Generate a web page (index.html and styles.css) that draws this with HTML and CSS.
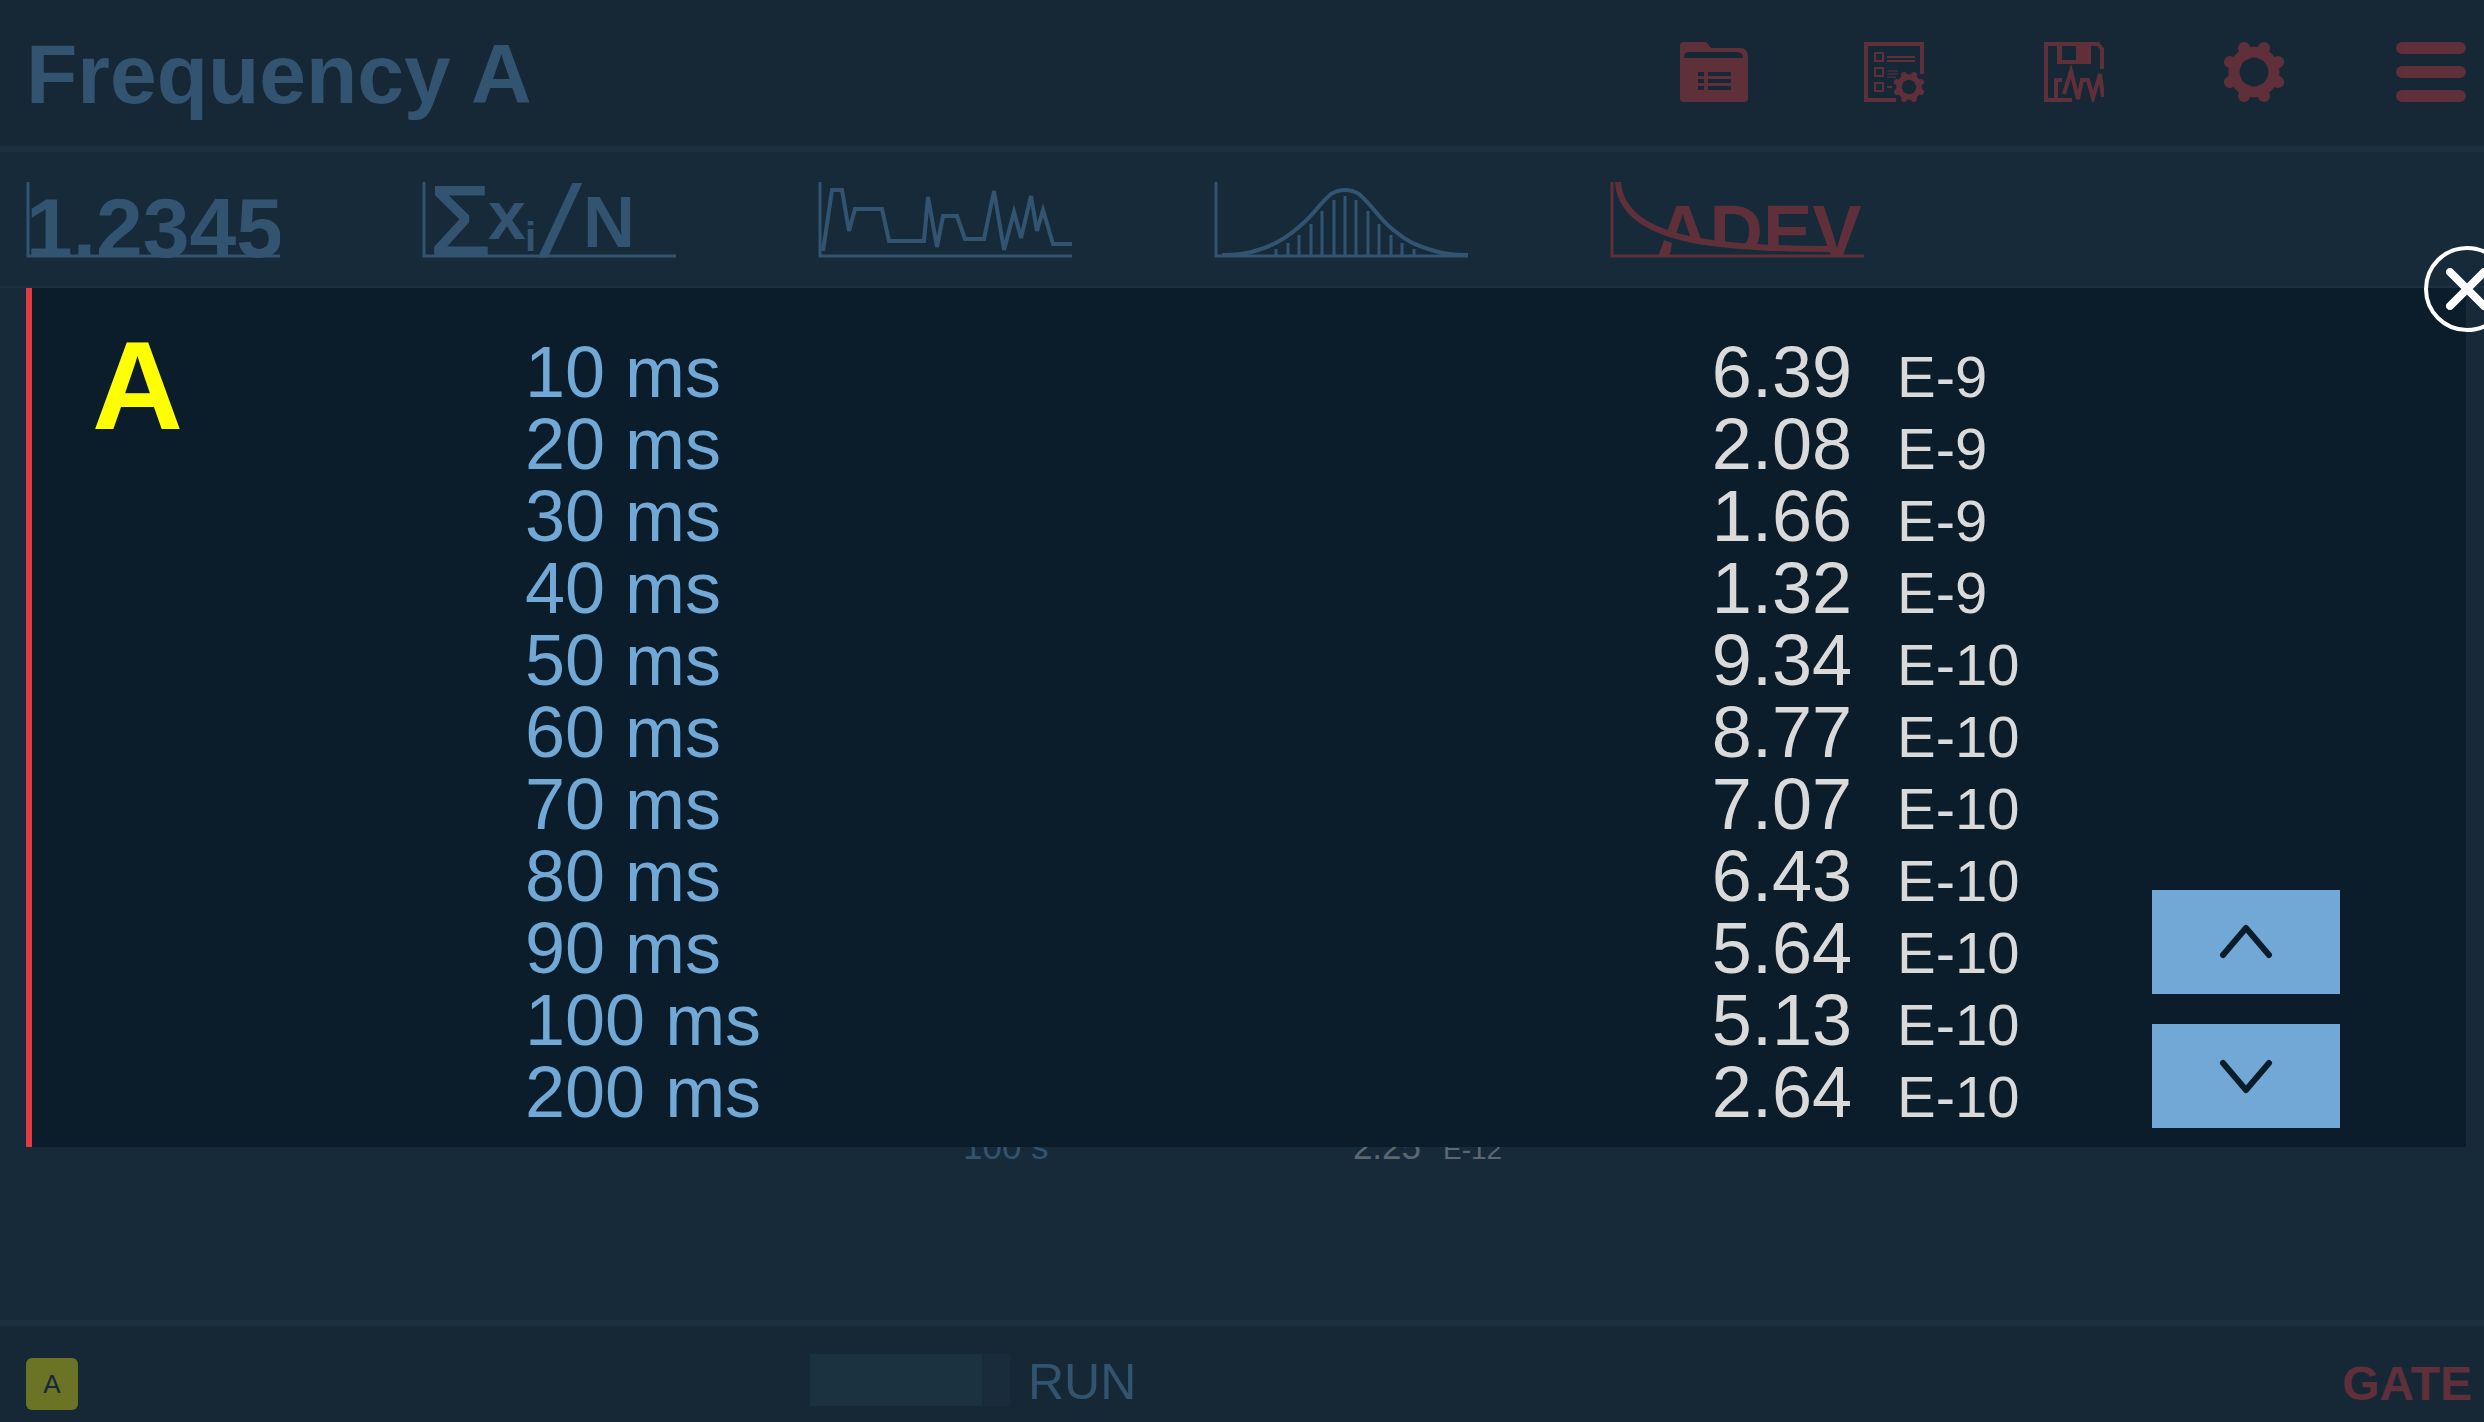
FILE: index.html
```html
<!DOCTYPE html>
<html lang="en">
<head>
  <meta charset="UTF-8" />
  <meta name="viewport" content="width=device-width, initial-scale=1.0"/>
  <title>Frequency A</title>
  <link rel="stylesheet" href="styles.css">
</head>
<body>
  <header class="topbar">
    <h1>Frequency A</h1>
    <div class="tools">
      <button aria-label="Files">
        <svg width="68" height="60" viewBox="0 0 68 60">
          <path fill="currentColor" fill-rule="evenodd" d="M4 0H25Q27 0 28 2L31 6H60Q68 6 68 15V56Q68 60 64 60H4Q0 60 0 56V4Q0 0 4 0ZM8 10Q4 10 4 16H63Q63 10 57 10Z"/>
          <path class="cut" d="M18 32H24M28 32H51M18 39H24M28 39H51M18 46H24M28 46H51"/>
        </svg>
      </button>
      <button aria-label="Measurement setup">
        <svg width="60" height="60" viewBox="0 0 60 60">
          <path class="line" d="M58 32V2H2V58H32"/>
          <path class="line thin" d="M11 11H19V19H11ZM11 26H19V34H11ZM11 41H19V49H11ZM23 15H51M23 19H51M23 45H28"/>
          <path class="line faint" d="M23 29H34M23 32H34M23 35H32"/>
          <g transform="translate(30 30) scale(.5)">
            <circle class="line ring" cx="30" cy="30" r="20"/>
            <path class="line teeth" d="M37.6 11.5L40 6M48.5 22.4L54 20M48.5 37.6L54 40M37.6 48.5L40 54M22.4 48.5L20 54M11.5 37.6L6 40M11.5 22.4L6 20M22.4 11.5L20 6"/>
          </g>
        </svg>
      </button>
      <button aria-label="Save data">
        <svg width="60" height="60" viewBox="0 0 60 60">
          <path class="line" d="M28 58H2V2H54L58 7V27"/>
          <path fill="currentColor" fill-rule="evenodd" d="M13 2H47V22H13ZM18 4V18H32V4Z"/>
          <path class="line" d="M12 58V38H18"/>
          <path class="line" d="M20 52L27 29L34 57L38 38H44L49 56L56 32L59 55"/>
        </svg>
      </button>
      <button aria-label="Settings">
        <svg width="60" height="60" viewBox="0 0 60 60">
          <circle class="line ring" cx="30" cy="30" r="20"/>
          <path class="line teeth" d="M37.6 11.5L40 6M48.5 22.4L54 20M48.5 37.6L54 40M37.6 48.5L40 54M22.4 48.5L20 54M11.5 37.6L6 40M11.5 22.4L6 20M22.4 11.5L20 6"/>
        </svg>
      </button>
      <button class="menu" aria-label="Menu">
        <svg width="70" height="60" viewBox="0 0 70 60">
          <path class="line bars" d="M6 6H64M6 30H64M6 54H64"/>
        </svg>
      </button>
    </div>
  </header>

  <nav class="tabs">
    <button aria-label="Numeric">
      <svg width="254" height="76" viewBox="0 0 254 76">
        <path class="line axis" d="M2 0V74H254"/>
        <text x="0" y="75" class="t84">1.2345</text>
      </svg>
    </button>
    <button aria-label="Statistics">
      <svg width="254" height="76" viewBox="0 0 254 76">
        <path class="line axis" d="M2 0V74H254"/>
        <text x="8" y="73" class="t98 sum">Σ</text>
        <text x="66" y="57" class="t68">x</text>
        <text x="103" y="69" class="t40">i</text>
        <text x="123" y="73" class="t98 slash">/</text>
        <text x="161" y="65" class="t72">N</text>
      </svg>
    </button>
    <button aria-label="Trend">
      <svg width="254" height="76" viewBox="0 0 254 76">
        <path class="line axis" d="M2 0V74H254"/>
        <path class="line" d="M5 69L14 8H24L31 49L37 27H64L71 59H106L110 15L119 65L125 34H139L147 57H166L176 9L186 68L196 30L203 56L213 14L219 49L225 28L235 62H254"/>
      </svg>
    </button>
    <button aria-label="Histogram">
      <svg width="254" height="76" viewBox="0 0 254 76">
        <path class="line axis" d="M2 0V74H254"/>
        <path class="line" d="M8 73C24 73 32 72 41 69C52 66 60 62 67 58C74 54 79 50 85 45C91 40 96 35 101 29C106 23 111 17 117 12C122 9 126 8 131 8C136 8 140 9 145 12C151 17 156 23 161 29C166 35 171 41 177 46C183 51 188 55 195 59C202 63 210 66 221 69C230 72 240 73 254 73"/>
        <path class="line axis" d="M62 67V74M74 61V74M85 53V74M97 42V74M108 29V74M120 18V74M131 14V74M142 18V74M154 29V74M165 42V74M177 53V74M188 61V74M200 67V74"/>
      </svg>
    </button>
    <button class="active" aria-label="Allan deviation">
      <svg width="254" height="76" viewBox="0 0 254 76">
        <text x="46" y="75" class="t74">ADEV</text>
        <path class="shade" d="M44 48C90 62 130 66 220 66V76H60L62 61L44 54Z"/>
        <path class="line axis" d="M2 0V74H254"/>
        <path class="line curve" d="M8 0C12 60 110 67 220 67"/>
      </svg>
    </button>
  </nav>

  <main>
    <table class="summary">
      <tr>
        <td>100 s</td>
        <td class="value">2.25</td>
        <td class="exp">E-12</td>
      </tr>
    </table>

    <section class="popup" role="dialog" aria-label="Allan deviation values">
      <h2>A</h2>
      <table class="values">
        <tr><td>10 ms</td><td class="value">6.39</td><td class="exp">E-9</td></tr>
        <tr><td>20 ms</td><td class="value">2.08</td><td class="exp">E-9</td></tr>
        <tr><td>30 ms</td><td class="value">1.66</td><td class="exp">E-9</td></tr>
        <tr><td>40 ms</td><td class="value">1.32</td><td class="exp">E-9</td></tr>
        <tr><td>50 ms</td><td class="value">9.34</td><td class="exp">E-10</td></tr>
        <tr><td>60 ms</td><td class="value">8.77</td><td class="exp">E-10</td></tr>
        <tr><td>70 ms</td><td class="value">7.07</td><td class="exp">E-10</td></tr>
        <tr><td>80 ms</td><td class="value">6.43</td><td class="exp">E-10</td></tr>
        <tr><td>90 ms</td><td class="value">5.64</td><td class="exp">E-10</td></tr>
        <tr><td>100 ms</td><td class="value">5.13</td><td class="exp">E-10</td></tr>
        <tr><td>200 ms</td><td class="value">2.64</td><td class="exp">E-10</td></tr>
      </table>
      <div class="scroll">
        <button aria-label="Scroll up">
          <svg width="54" height="36" viewBox="0 0 54 36"><path d="M4 31L27 4L50 31"/></svg>
        </button>
        <button aria-label="Scroll down">
          <svg width="54" height="36" viewBox="0 0 54 36"><path d="M4 5L27 32L50 5"/></svg>
        </button>
      </div>
      <button class="close" aria-label="Close">
        <svg width="42" height="42" viewBox="0 0 42 42"><path d="M4 4L38 38M38 4L4 38"/></svg>
      </button>
    </section>
  </main>

  <footer class="status">
    <span class="badge">A</span>
    <div class="run">
      <progress id="run" value="86" max="100"></progress>
      <label for="run">RUN</label>
    </div>
    <span class="gate">GATE</span>
  </footer>
</body>
</html>
```
FILE: styles.css
```css
* {
  box-sizing: border-box;
}
body {
  margin: 0;
  min-height: 100vh;
  display: flex;
  flex-direction: column;
  overflow: hidden;
  background-color: #162a3a;
  color: #335470;
  font-family: "Liberation Sans", Arial, sans-serif;
}
h1, h2 {
  margin: 0;
}
button {
  padding: 0;
  border: none;
  background: none;
  color: inherit;
  cursor: pointer;
}
svg {
  display: block;
}
table {
  border-collapse: collapse;
}
td {
  padding: 0;
  vertical-align: baseline;
}

/* top bar */
.topbar {
  display: flex;
  justify-content: space-between;
  align-items: center;
  height: 152px;
  padding: 0 18px 2px 26px;
  background-color: #162836;
  border-bottom: 6px solid #1b3040;
}
h1 {
  padding-top: 4px;
  font-size: 84px;
  line-height: 96px;
}
.tools {
  display: grid;
  grid-template-columns: repeat(4, 180px) 122px;
  justify-items: center;
  color: #5f303a;
}
.tools .menu {
  justify-self: end;
}

/* icon strokes */
.line {
  fill: none;
  stroke: currentColor;
  stroke-width: 4;
}
.thin {
  stroke-width: 2;
}
.faint {
  stroke-width: 2;
  opacity: 0.5;
}
.ring {
  stroke-width: 11;
}
.teeth {
  stroke-width: 12;
  stroke-linecap: round;
}
.bars {
  stroke-width: 12;
  stroke-linecap: round;
}
.curve {
  stroke-width: 6;
}
.axis {
  stroke-width: 3;
}
.cut {
  fill: none;
  stroke: #162836;
  stroke-width: 4;
}
.shade {
  fill: #162a3a;
}

/* view tabs */
.tabs {
  display: flex;
  align-items: center;
  gap: 142px;
  height: 136px;
  padding: 2px 26px 0;
  border-bottom: 2px solid #1b3040;
}
.tabs text {
  fill: currentColor;
  font-family: "Liberation Sans", Arial, sans-serif;
  font-weight: bold;
}
.tabs .active {
  color: #5f303a;
}
.t40 {
  font-size: 40px;
}
.t68 {
  font-size: 68px;
}
.t72 {
  font-size: 72px;
}
.t74 {
  font-size: 74px;
}
.t84 {
  font-size: 84px;
}
.t98 {
  font-size: 98px;
}
.slash {
  font-style: italic;
}
.tabs .sum,
.tabs .slash {
  font-weight: normal;
  stroke: currentColor;
  stroke-width: 2;
}

main {
  position: relative;
  flex: 1;
  display: flex;
  flex-direction: column;
  justify-content: flex-end;
  align-items: center;
  padding-bottom: 151px;
}
.value {
  text-align: right;
}
.summary {
  width: 558px;
  font-size: 35px;
  line-height: 44px;
}
.summary .value {
  color: #5c6770;
}
.summary .exp {
  width: 100px;
  padding-left: 22px;
  color: #5c6770;
  font-size: 28px;
  line-height: 28px;
}

/* popup with the value list */
.popup {
  position: absolute;
  top: 0;
  left: 26px;
  right: 18px;
  display: grid;
  grid-template-columns: 493px 1fr 188px;
  padding: 48px 126px 19px 0;
  background-color: #0b1d2a;
  border-left: 6px solid #e23a40;
}
h2 {
  padding-left: 60px;
  color: #ffff00;
  font-size: 126px;
  line-height: 100px;
}
.values {
  color: #71a8d6;
  font-size: 72px;
  line-height: 72px;
}
.values .value {
  color: #dadada;
}
.values .exp {
  width: 300px;
  padding-left: 45px;
  color: #dadada;
  font-size: 58px;
  line-height: 60px;
}
.scroll {
  align-self: end;
  display: grid;
  gap: 30px;
}
.scroll button {
  display: grid;
  place-items: center;
  height: 104px;
  background-color: #71a8d6;
  color: #0b1d2a;
}
.scroll path,
.close path {
  fill: none;
  stroke: currentColor;
  stroke-width: 6;
  stroke-linecap: round;
  stroke-linejoin: round;
}
.close {
  position: absolute;
  top: -42px;
  right: -44px;
  width: 86px;
  height: 86px;
  display: grid;
  place-items: center;
  border: 4px solid #ffffff;
  border-radius: 50%;
  color: #ffffff;
}
.close path {
  stroke-width: 8;
}

/* status bar */
.status {
  display: grid;
  grid-template-columns: 784px 1fr auto;
  align-items: center;
  height: 102px;
  padding: 0 12px 0 26px;
  background-color: #162836;
  border-top: 6px solid #1b3040;
  font-size: 50px;
  line-height: 60px;
}
.badge {
  width: 52px;
  height: 52px;
  margin-top: 20px;
  border-radius: 6px;
  background-color: #6a7424;
  color: #162836;
  font-size: 26px;
  line-height: 52px;
  text-align: center;
}
.run {
  display: flex;
  align-items: center;
  gap: 18px;
  padding-top: 12px;
}
.run label {
  padding-top: 4px;
}
progress {
  appearance: none;
  width: 200px;
  height: 52px;
  border: none;
}
progress::-webkit-progress-bar {
  background-color: #192c3b;
}
progress::-webkit-progress-value {
  background-color: #1b3241;
}
.gate {
  padding-top: 20px;
  color: #5f303a;
  font-size: 48px;
  font-weight: bold;
}
```
